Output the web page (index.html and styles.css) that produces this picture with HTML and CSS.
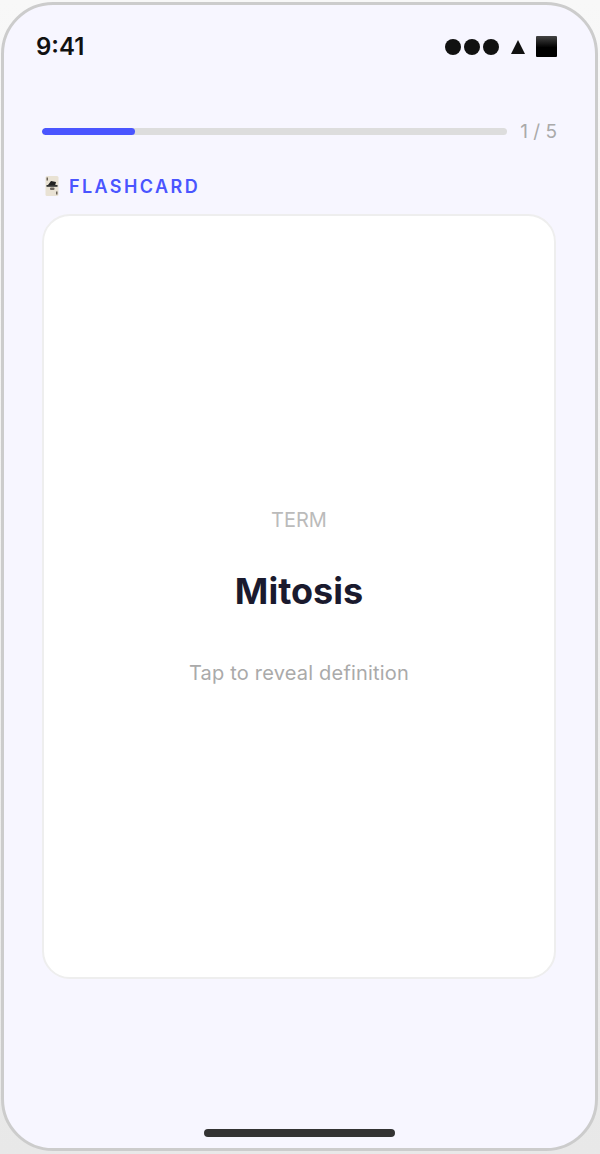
FILE: index.html
```html
<!DOCTYPE html>
<html lang="en">
<head>
  <meta charset="UTF-8" />
  <title>Flashcard</title>
  <link rel="stylesheet" href="styles.css">
</head>
<body>
  <div class="phone">
    <div class="status-bar">
      <span class="time">9:41</span>
      <div class="status-icons">
        <div class="dots">
          <span class="dot"></span>
          <span class="dot"></span>
          <span class="dot"></span>
        </div>
        <svg class="wifi" width="14" height="14" viewBox="0 0 14 14"><path d="M7 0 L14 14 L0 14 Z" fill="#111"/></svg>
        <span class="battery"></span>
      </div>
    </div>

    <div class="progress-row">
      <div class="progress-track"><div class="progress-fill" style="width:20%"></div></div>
      <span class="progress-label">1 / 5</span>
    </div>

    <div class="section-label">
      <svg class="card-icon" width="14" height="20" viewBox="0 0 14 20">
        <rect x="0.5" y="0" width="13" height="20" rx="1.5" fill="#e9e2d4"/>
        <path d="M3 9 L6 5 L11 6 L10 10 L4 10 Z" fill="#222222"/>
        <rect x="1.5" y="9" width="11" height="1.8" fill="#333333"/>
        <rect x="5" y="11.5" width="4.5" height="2.5" rx="1" fill="#6d665f"/>
        <rect x="1.5" y="1.5" width="1.5" height="3" fill="#6a6258"/>
        <rect x="11" y="15.5" width="1.5" height="3" fill="#6a6258"/>
      </svg>
      <span class="section-text">FLASHCARD</span>
    </div>

    <div class="flashcard">
      <div class="term-label">TERM</div>
      <div class="term">Mitosis</div>
      <div class="hint">Tap to reveal definition</div>
    </div>

    <div class="home-indicator"></div>
  </div>
</body>
</html>
```

FILE: styles.css
```css
* {
  box-sizing: border-box;
}

html, body {
  margin: 0;
  height: 100%;
}

body {
  font-family: 'Inter', 'Liberation Sans', sans-serif;
  background: linear-gradient(#f8f8f8, #e8e8e8);
  padding: 2px 2px 3px 1px;
  overflow: hidden;
}

.phone {
  height: 1149px;
  background-color: #f7f6ff;
  border: 3px solid #cccccc;
  border-radius: 52px;
  padding: 0 39px 11px 38px;
  display: flex;
  flex-direction: column;
}

.status-bar {
  height: 41px;
  margin-top: 21px;
  margin-left: -6px;
  margin-right: -1px;
  display: flex;
  align-items: center;
  justify-content: space-between;
}

.time {
  font-size: 24px;
  font-weight: 600;
  color: #111111;
}

.status-icons {
  display: flex;
  align-items: center;
}

.dots {
  display: flex;
  gap: 3px;
  margin-right: 12px;
}

.dot {
  width: 16px;
  height: 16px;
  border-radius: 50%;
  background: #111111;
}

.wifi {
  margin-right: 11px;
}

.battery {
  width: 21px;
  height: 21px;
  background: linear-gradient(#444444, #000000 55%);
  border-radius: 1px;
}

.progress-row {
  margin-top: 53px;
  margin-right: -1px;
  display: flex;
  align-items: center;
  gap: 13px;
}

.progress-track {
  flex: 1;
  height: 7px;
  background: #dddddd;
  border-radius: 4px;
  overflow: hidden;
}

.progress-fill {
  height: 100%;
  background: #4a55ff;
  border-radius: 4px;
}

.progress-label {
  font-size: 19px;
  line-height: 23px;
  color: #aaaaaa;
  white-space: nowrap;
}

.section-label {
  margin-top: 31px;
  display: flex;
  align-items: center;
  gap: 10px;
  height: 24px;
  padding-left: 3px;
}

.section-text {
  font-size: 18px;
  font-weight: 600;
  letter-spacing: 2.4px;
  color: #4a55ff;
}

.flashcard {
  margin-top: 16px;
  height: 765px;
  background: #ffffff;
  border: 2px solid #eeeeee;
  border-radius: 28px;
  display: flex;
  flex-direction: column;
  align-items: center;
  justify-content: center;
}

.term-label {
  font-size: 20px;
  color: #bbbbbb;
}

.term {
  margin-top: 37px;
  font-size: 36px;
  font-weight: 700;
  color: #1a1a2e;
}

.hint {
  margin-top: 48px;
  font-size: 20px;
  letter-spacing: 0.2px;
  color: #aaaaaa;
}

.home-indicator {
  margin-top: auto;
  align-self: center;
  width: 191px;
  height: 8px;
  background: #333333;
  border-radius: 4px;
}
```
